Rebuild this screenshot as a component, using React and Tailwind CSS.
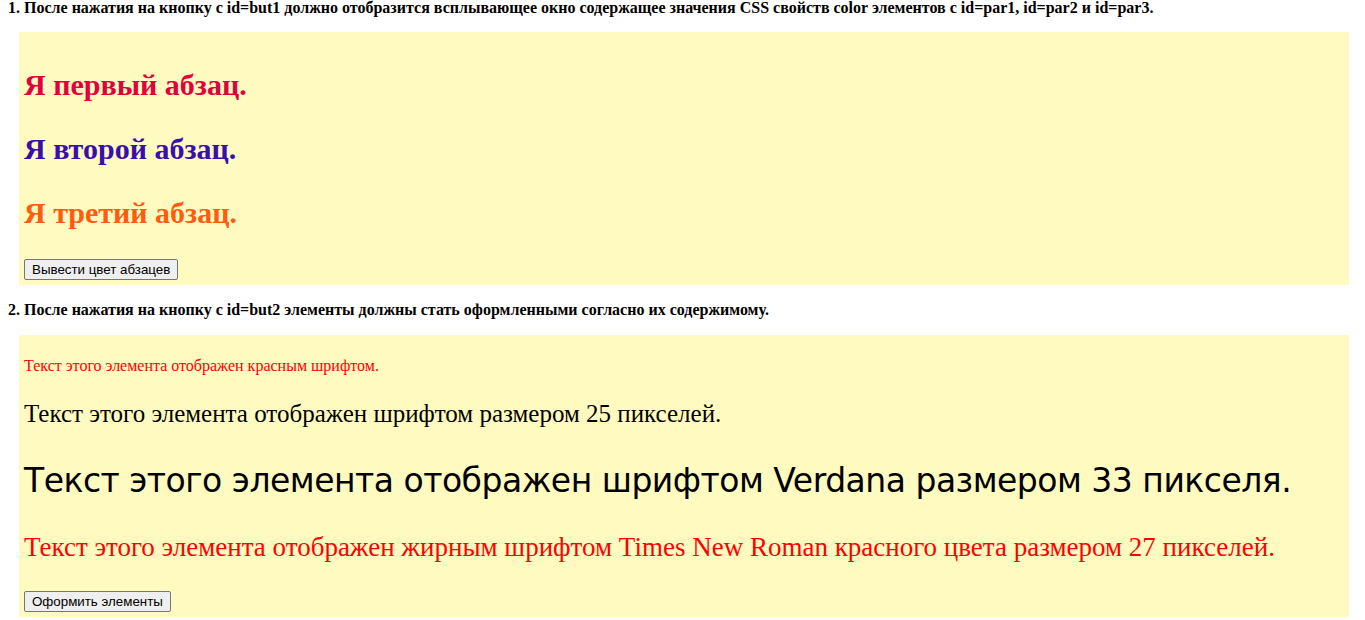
export default function App() {
  const serif = "font-['Liberation_Serif','Times_New_Roman',serif]";
  const btn =
    "block h-[21px] px-[7px] text-[13.33px] leading-[15px] font-['Liberation_Sans',Arial,sans-serif] text-black bg-[#efefef] border border-[#767676] rounded-[2px]";
  return (
    <div className={`bg-white min-h-[620px] text-black ${serif}`}>
      <div className="px-[8px]">
        <div className="text-[16px] leading-[16px] font-bold">
          1. После нажатия на кнопку с id=but1 должно отобразится всплывающее окно содержащее значения CSS свойств color элементов с id=par1, id=par2 и id=par3.
        </div>
      </div>
      <div className="ml-[19px] mr-[16px] mt-[16px] bg-[#fffbc0] p-[5px]">
        <p className="mt-[31px] text-[30px] leading-[34px] font-bold text-[#e2003c]">Я первый абзац.</p>
        <p className="mt-[30px] text-[30px] leading-[34px] font-bold text-[#3a0eac]">Я второй абзац.</p>
        <p className="mt-[30px] text-[30px] leading-[34px] font-bold text-[#ff5c0e]">Я третий абзац.</p>
        <button className={`mt-[29px] ${btn}`}>Вывести цвет абзацев</button>
      </div>
      <div className="px-[8px] pt-[17px]">
        <div className="text-[16px] leading-[16px] font-bold">
          2. После нажатия на кнопку с id=but2 элементы должны стать оформленными согласно их содержимому.
        </div>
      </div>
      <div className="ml-[19px] mr-[16px] mt-[17px] bg-[#fffbc0] p-[5px]">
        <p className="mt-[17px] text-[16px] leading-[18px] text-[#ff0000]">Текст этого элемента отображен красным шрифтом.</p>
        <p className="mt-[24px] text-[25px] leading-[29px]">Текст этого элемента отображен шрифтом размером 25 пикселей.</p>
        <p className="mt-[34px] text-[33px] leading-[38px] tracking-[-0.5px] font-['Verdana','DejaVu_Sans',sans-serif]">Текст этого элемента отображен шрифтом Verdana размером 33 пикселя.</p>
        <p className="mt-[32px] text-[27px] leading-[31px] text-[#ff0000]">Текст этого элемента отображен жирным шрифтом Times New Roman красного цвета размером 27 пикселей.</p>
        <button className={`mt-[28px] ${btn}`}>Оформить элементы</button>
      </div>
    </div>
  );
}
